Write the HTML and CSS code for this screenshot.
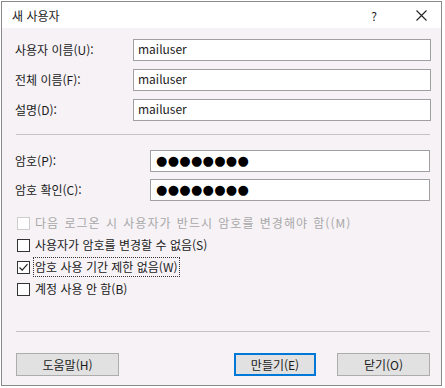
FILE: index.html
```html
<!DOCTYPE html>
<html lang="ko">
<head>
  <meta charset="UTF-8">
  <meta name="viewport" content="width=device-width, initial-scale=1.0">
  <title>새 사용자</title>
  <link rel="stylesheet" href="styles.css">
</head>
<body>
  <div class="window">
    <div class="titlebar">
      <span class="title">새 사용자</span>
      <span class="help">?</span>
      <span class="close">
        <svg width="11" height="11" viewBox="0 0 11 11"><path d="M0.5 0.5 L10.5 10.5 M10.5 0.5 L0.5 10.5" stroke="#222" stroke-width="1.1" fill="none"/></svg>
      </span>
    </div>

    <div class="client">
      <div class="fields">
        <label>사용자 이름(U):</label>
        <div class="input">mailuser</div>
        <label>전체 이름(F):</label>
        <div class="input">mailuser</div>
        <label>설명(D):</label>
        <div class="input">mailuser</div>
      </div>

      <div class="sep"></div>

      <div class="fields pw">
        <label>암호(P):</label>
        <div class="input dots">●●●●●●●●</div>
        <label>암호 확인(C):</label>
        <div class="input dots">●●●●●●●●</div>
      </div>

      <div class="checks">
        <div class="check disabled"><span class="box"></span><span class="text">다음 로그온 시 사용자가 반드시 암호를 변경해야 함((M)</span></div>
        <div class="check"><span class="box"></span><span class="text">사용자가 암호를 변경할 수 없음(S)</span></div>
        <div class="check"><span class="box"><svg width="11" height="11" viewBox="0 0 11 11"><path d="M1.5 5.5 L4.2 8.2 L9.5 2.2" stroke="#222" stroke-width="1.2" fill="none"/></svg></span><span class="text focus">암호 사용 기간 제한 없음(W)</span></div>
        <div class="check"><span class="box"></span><span class="text">계정 사용 안 함(B)</span></div>
      </div>

      <div class="footer">
        <div class="sep"></div>
        <div class="buttons">
          <button class="btn help-btn">도움말(H)</button>
          <button class="btn default create">만들기(E)</button>
          <button class="btn cancel">닫기(O)</button>
        </div>
      </div>
    </div>
  </div>
</body>
</html>
```

FILE: styles.css
```css
html {
  --bg: #f6f2f6;
  --text: #1b1b1b;
  --line: #a9a9a9;
}

body {
  margin: 0;
  padding: 1px 0 0 1px;
  background: #ffffff;
  font-family: "Noto Sans CJK KR", "Noto Sans", sans-serif;
  font-size: 12px;
  color: var(--text);
}

.window {
  box-sizing: border-box;
  width: 441px;
  height: 385px;
  border: 1px solid #8a8a8a;
  display: flex;
  flex-direction: column;
  background: var(--bg);
}

.titlebar {
  height: 26px;
  background: #ffffff;
  display: flex;
  align-items: center;
  padding: 0 0 0 10px;
}

.title {
  flex: 1;
}

.help {
  width: 12px;
  text-align: center;
  margin-right: 36px;
}

.close {
  display: flex;
  margin-right: 14px;
}

.client {
  flex: 1;
  display: flex;
  flex-direction: column;
  padding: 11px 10px 9px 13px;
}

.fields {
  display: grid;
  grid-template-columns: 118px 1fr;
  row-gap: 8px;
  align-items: center;
}

.fields label {
  line-height: 22px;
}

.fields.pw {
  grid-template-columns: 135px 1fr;
  row-gap: 7px;
  margin-right: 1px;
}

.input {
  box-sizing: border-box;
  height: 22px;
  background: #ffffff;
  border: 1px solid #a0a0a0;
  padding: 0 4px;
  line-height: 18px;
}

.input.dots {
  font-family: "DejaVu Sans", sans-serif;
  font-size: 13px;
  letter-spacing: 0.3px;
  line-height: 20px;
  padding-left: 5px;
  color: #000;
}

.sep {
  height: 1px;
  background: #c6c2c6;
  margin: 13px 1px 15px 1px;
}

.checks {
  margin-top: 11px;
  display: flex;
  flex-direction: column;
}

.check {
  height: 22px;
  display: flex;
  align-items: center;
}

.box {
  box-sizing: border-box;
  width: 13px;
  height: 13px;
  border: 1px solid #333;
  background: #ffffff;
  margin: 0 3px 0 2px;
  display: flex;
  align-items: center;
  justify-content: center;
}

.text {
  padding: 1px 1px;
  border: 1px solid transparent;
  line-height: 16px;
}

.text.focus {
  border: 1px dotted #333;
}

.check.disabled {
  color: #a8a8a8;
  letter-spacing: 1px;
  word-spacing: 1px;
}

.check.disabled .box {
  border-color: #cdcdcd;
}

.footer {
  margin-top: auto;
}

.footer .sep {
  margin: 0 1px 21px 1px;
}

.buttons {
  display: flex;
  align-items: center;
}

.btn {
  box-sizing: border-box;
  height: 23px;
  background: #e1e1e1;
  border: 1px solid #adadad;
  font-family: inherit;
  font-size: 12px;
  color: var(--text);
  padding: 0;
}

.help-btn {
  width: 103px;
  margin-left: 1px;
}

.create {
  width: 82px;
  margin-left: auto;
}

.btn.default {
  border: 1px solid #0078d7;
  box-shadow: inset 0 0 0 1px #0078d7;
}

.cancel {
  width: 93px;
  margin-left: 21px;
  margin-right: 1px;
}
```
